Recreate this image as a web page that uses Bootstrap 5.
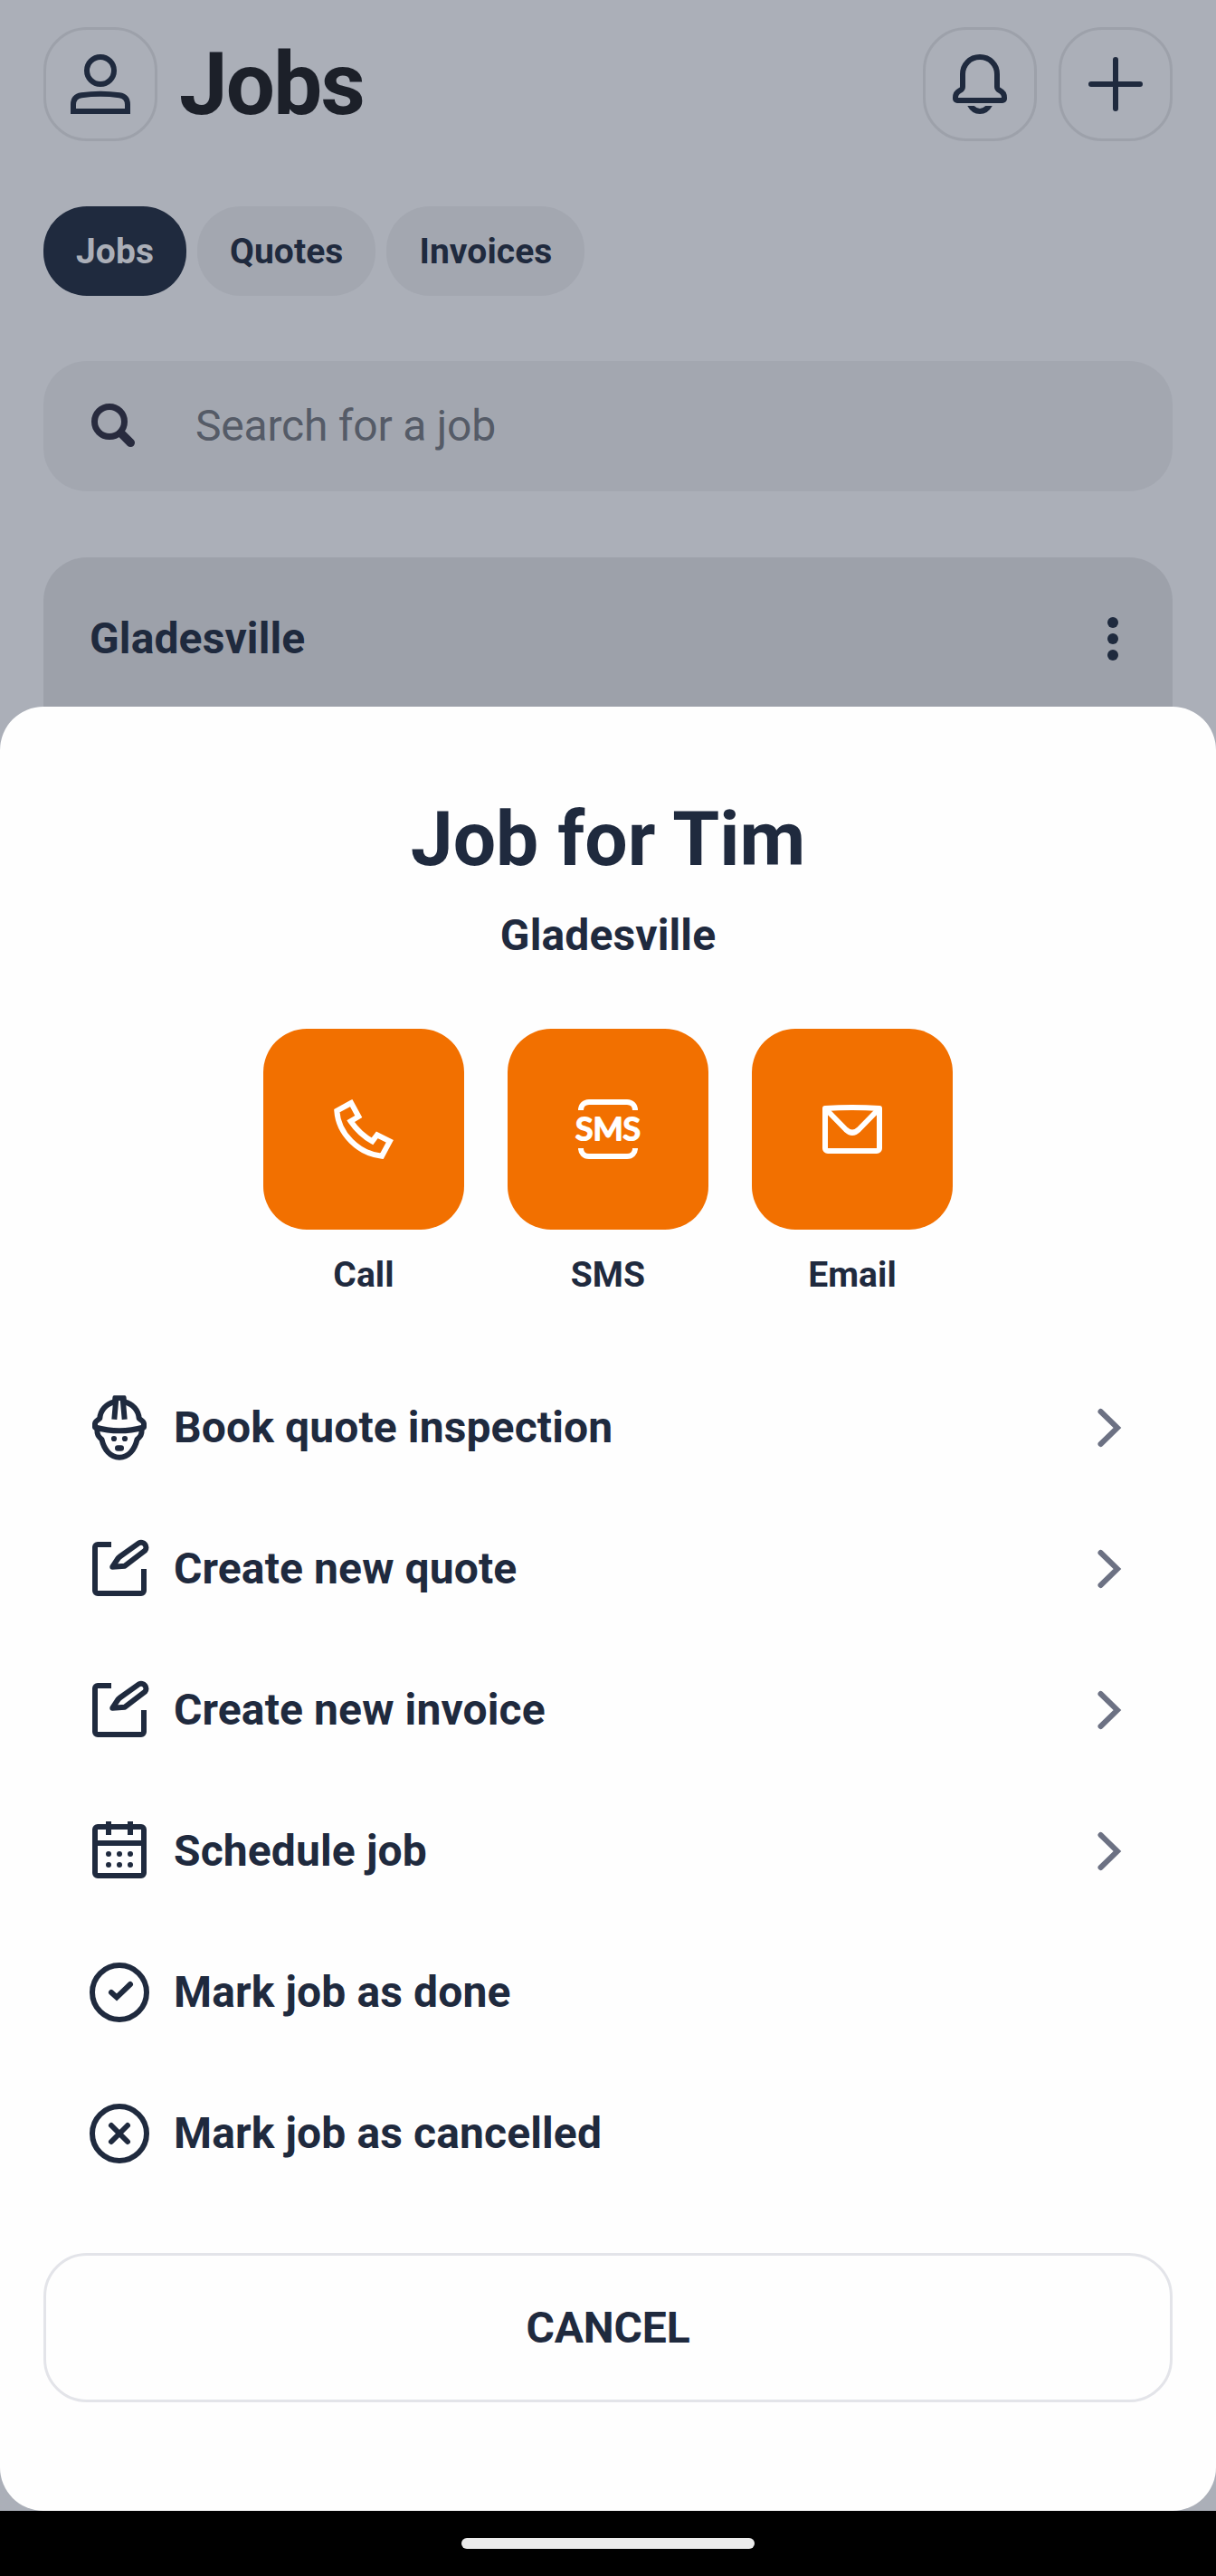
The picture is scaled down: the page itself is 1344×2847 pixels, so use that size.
<!DOCTYPE html>
<html lang="en">
<head>
<meta charset="utf-8">
<meta name="viewport" content="width=device-width, initial-scale=1">
<title>Jobs</title>
<link href="https://cdn.jsdelivr.net/npm/bootstrap@5.3.0/dist/css/bootstrap.min.css" rel="stylesheet">
<style>
  :root { --ink: #1f2a3e; --r: 48px; }
  body { font-family: Roboto, "Liberation Sans", sans-serif; color: var(--ink); background: #abafb8; }
  svg { display: block; flex: none; }
  .ico { width: 72px; height: 72px; fill: none; stroke: currentColor; stroke-width: 6; }
  .ico-solid { fill: currentColor; stroke: none; }
  .app-screen { width: 1344px; height: 2847px; background: #abafb8; }
  .app-top { padding: 30px 48px 0; }
  .round-btn { width: 126px; height: 126px; border: 3px solid #9da1aa; border-radius: var(--r); padding: 0; color: var(--ink); background: none; }
  .app-title { font-size: 96px; font-weight: 700; line-height: 126px; letter-spacing: -1.8px; color: #1c2029; margin: 0 0 0 24px; }
  .app-tabs { padding: 72px 48px 0; gap: 12px; }
  .app-tabs .nav-link { height: 99px; line-height: 101px; padding: 0 36px; border-radius: var(--r); background: #a3a7b0; color: var(--ink); font-size: 39px; font-weight: 700; letter-spacing: .06px; }
  .app-tabs .nav-link.active { background: #1f2a3e; color: #abafb8; }
  .search-box { height: 144px; margin: 72px 48px 0; padding: 0 48px; border-radius: var(--r); background: #a3a7b0; gap: 48px; font-size: 48px; letter-spacing: -.22px; color: #555b67; }
  .search-box svg { color: #282b3e; }
  .job-card { height: 300px; margin: 73px 48px 0; border-radius: var(--r); background: #9da1aa; padding: 54px 30px 0 51px; }
  .strong-48 { font-size: 48px; font-weight: 700; line-height: 72px; letter-spacing: .12px; }
  .sheet { left: 0; right: 0; top: 781px; height: 1994px; border-radius: var(--r); background: #fefefe; padding: 97px 48px 0; }
  .sheet-title { font-size: 84px; font-weight: 700; line-height: 99px; margin: 0; }
  .sheet-sub { margin-top: 21px; }
  .tiles { gap: 48px; margin-top: 67px; }
  .tile-box { width: 222px; height: 222px; border-radius: var(--r); background: #f27000; color: #fff; padding: 0; border: 0; }
  .tile-label { font-size: 39px; font-weight: 700; line-height: 48px; margin-top: 26px; letter-spacing: .1px; }
  .actions { margin-top: 67px; }
  .actions .list-group-item { height: 156px; padding: 0 36px 0 48px; border: 0; background: none; color: var(--ink); }
  .actions .strong-48 { margin-left: 24px; }
  .actions .chev { color: #6c7183; }
  .cancel-btn { height: 165px; border: 3px solid #e3e4e9; border-radius: var(--r); margin-top: 54px; font-size: 48px; font-weight: 700; letter-spacing: -.15px; color: var(--ink); background: none; }
  .sys-bar { left: 0; right: 0; bottom: 0; height: 72px; background: #000; }
  .sys-bar span { width: 324px; height: 12px; border-radius: 6px; background: #ebebeb; }
</style>
</head>
<body>
<div class="app-screen position-relative overflow-hidden">

  <header class="app-top d-flex align-items-center">
    <button class="round-btn d-flex align-items-center justify-content-center" aria-label="Profile">
      <svg class="ico" viewBox="0 0 72 72"><circle cx="36" cy="21" r="15"/><path d="M6 66V58.500C6 52 10 49 15 48.200Q36 45.200 57 48.200C62 49 66 52 66 58.500V66Z"/></svg>
    </button>
    <h1 class="app-title">Jobs</h1>
    <div class="d-flex gap-4 ms-auto">
      <button class="round-btn d-flex align-items-center justify-content-center" aria-label="Notifications">
        <svg class="ico" viewBox="0 0 72 72"><path d="M36 6C25 6 17 14.500 17 25V39c0 2-1 3-3 4C11 44.500 9 47 9 51v1a2 2 0 0 0 2 2H61a2 2 0 0 0 2-2v-1C63 47 61 44.500 58 43c-2-1-3-2-3-4V25C55 14.500 47 6 36 6Z"/><path fill="currentColor" stroke="none" d="M22.300 60H29.700Q36 66 42.300 60H49.700Q45 69 36 69Q27 69 22.300 60Z"/></svg>
      </button>
      <button class="round-btn d-flex align-items-center justify-content-center" aria-label="Add">
        <svg class="ico" viewBox="0 0 72 72" stroke-linecap="round"><path d="M36 9V63M9 36H63"/></svg>
      </button>
    </div>
  </header>

  <nav class="app-tabs nav">
    <a class="nav-link active">Jobs</a>
    <a class="nav-link">Quotes</a>
    <a class="nav-link">Invoices</a>
  </nav>

  <div class="search-box d-flex align-items-center">
    <svg class="ico" viewBox="0 0 72 72" stroke-linecap="round"><circle cx="25" cy="31" r="16.500" stroke-width="7"/><path stroke-width="9.500" d="M38 44L48.300 54.300"/></svg>
    <span>Search for a job</span>
  </div>

  <section class="job-card d-flex justify-content-between align-items-start">
    <span class="strong-48">Gladesville</span>
    <svg class="ico ico-solid" viewBox="0 0 72 72"><circle cx="36" cy="18" r="6"/><circle cx="36" cy="36" r="6"/><circle cx="36" cy="54" r="6"/></svg>
  </section>

  <section class="sheet position-absolute">
    <h2 class="sheet-title text-center">Job for Tim</h2>
    <div class="sheet-sub strong-48 text-center">Gladesville</div>

    <div class="tiles d-flex justify-content-center text-center">
      <div>
        <button class="tile-box d-flex align-items-center justify-content-center" aria-label="Call">
          <svg class="ico" viewBox="0 0 72 72"><path d="M22.200 7L6.300 15.600C8 41 30 63 56 65.700L64.800 49.300L50.800 42.300L45.500 49.300C36 44 28 36.500 21.600 27.200L30.300 22Z"/></svg>
        </button>
        <div class="tile-label">Call</div>
      </div>
      <div>
        <button class="tile-box d-flex align-items-center justify-content-center" aria-label="SMS">
          <svg class="ico overflow-visible" viewBox="0 0 72 72"><path d="M6 15C6 10 9.500 6 15 6H57C62.500 6 66 10 66 15M6 57C6 62 9.500 66 15 66H57C62.500 66 66 62 66 57"/><text x="0" y="48.300" textLength="72" lengthAdjust="spacingAndGlyphs" font-family="Lato, sans-serif" font-weight="400" font-size="34" fill="currentColor" stroke-width="2.200" stroke-linejoin="round">SMS</text></svg>
        </button>
        <div class="tile-label">SMS</div>
      </div>
      <div>
        <button class="tile-box d-flex align-items-center justify-content-center" aria-label="Email">
          <svg class="ico" viewBox="0 0 72 72" stroke-linejoin="round"><path d="M6 13Q36 11 66 13V57a3 3 0 0 1-3 3H9a3 3 0 0 1-3-3Z"/><path d="M7 14L29 36.500Q36 43 43 36.500L65 14"/></svg>
        </button>
        <div class="tile-label">Email</div>
      </div>
    </div>

    <div class="actions list-group list-group-flush">
      <a class="list-group-item d-flex align-items-center">
        <svg class="ico" viewBox="0 0 72 72"><path stroke-linejoin="round" d="M30.500 7.500C21 9.500 15 17 14.300 25.500C12 28 9 28.500 9 31.500V35.500Q23 39.300 36 39.300T63 35.500V31.500C63 28.500 60 28 57.700 25.500C57 17 51 9.500 41.500 7.500"/><path d="M11.300 37C11.300 46 14 46 16.500 49C19 60 26 68.700 36 68.700S53 60 55.500 49C58 46 60.700 46 60.700 37"/><path d="M32.300 4L30.300 26.700M39.700 4L41.700 26.700" /><path fill="currentColor" stroke="none" d="M30 .3H42Q43.300 .3 43.500 2L44 6H28L28.500 2Q28.700 .3 30 .3Z"/><g fill="currentColor" stroke="none"><circle cx="30" cy="48" r="3.100"/><circle cx="42" cy="48" r="3.100"/><rect x="31" y="55.300" width="10" height="6.400" rx="3.200"/></g></svg>
        <span class="strong-48">Book quote inspection</span>
        <svg class="ico chev ms-auto" viewBox="0 0 72 72" stroke-linecap="round"><path d="M28.500 18L47 36L28.500 54"/></svg>
      </a>
      <a class="list-group-item d-flex align-items-center">
        <svg class="ico" viewBox="0 0 72 72" stroke-linejoin="round"><path d="M27 9H12a3 3 0 0 0-3 3v48a3 3 0 0 0 3 3h48a3 3 0 0 0 3-3V36"/><path d="M28.300 33.700L33.700 25.500Q34.600 23.800 37 22L57.500 7.400A5.500 5.500 0 0 1 64.300 15.700L42 32.700Z"/></svg>
        <span class="strong-48">Create new quote</span>
        <svg class="ico chev ms-auto" viewBox="0 0 72 72" stroke-linecap="round"><path d="M28.500 18L47 36L28.500 54"/></svg>
      </a>
      <a class="list-group-item d-flex align-items-center">
        <svg class="ico" viewBox="0 0 72 72" stroke-linejoin="round"><path d="M27 9H12a3 3 0 0 0-3 3v48a3 3 0 0 0 3 3h48a3 3 0 0 0 3-3V36"/><path d="M28.300 33.700L33.700 25.500Q34.600 23.800 37 22L57.500 7.400A5.500 5.500 0 0 1 64.300 15.700L42 32.700Z"/></svg>
        <span class="strong-48">Create new invoice</span>
        <svg class="ico chev ms-auto" viewBox="0 0 72 72" stroke-linecap="round"><path d="M28.500 18L47 36L28.500 54"/></svg>
      </a>
      <a class="list-group-item d-flex align-items-center">
        <svg class="ico" viewBox="0 0 72 72"><rect x="9" y="9" width="54" height="54" rx="3"/><path d="M9 27H63M24 3V18M48 3V18"/><path stroke-linecap="round" d="M24 39h.01M36 39h.01M48 39h.01M24 51h.01M36 51h.01M48 51h.01"/></svg>
        <span class="strong-48">Schedule job</span>
        <svg class="ico chev ms-auto" viewBox="0 0 72 72" stroke-linecap="round"><path d="M28.500 18L47 36L28.500 54"/></svg>
      </a>
      <a class="list-group-item d-flex align-items-center">
        <svg class="ico" viewBox="0 0 72 72" stroke-linecap="round"><circle cx="36" cy="36" r="30"/><path d="M27 36L33 41.500L48 27"/></svg>
        <span class="strong-48">Mark job as done</span>
      </a>
      <a class="list-group-item d-flex align-items-center">
        <svg class="ico" viewBox="0 0 72 72" stroke-linecap="round"><circle cx="36" cy="36" r="30"/><path d="M27 27L45 45M45 27L27 45"/></svg>
        <span class="strong-48">Mark job as cancelled</span>
      </a>
    </div>

    <button class="cancel-btn w-100">CANCEL</button>
  </section>

  <div class="sys-bar position-absolute d-flex align-items-center justify-content-center"><span></span></div>
</div>
<script src="https://cdn.jsdelivr.net/npm/bootstrap@5.3.0/dist/js/bootstrap.bundle.min.js"></script>
</body>
</html>
